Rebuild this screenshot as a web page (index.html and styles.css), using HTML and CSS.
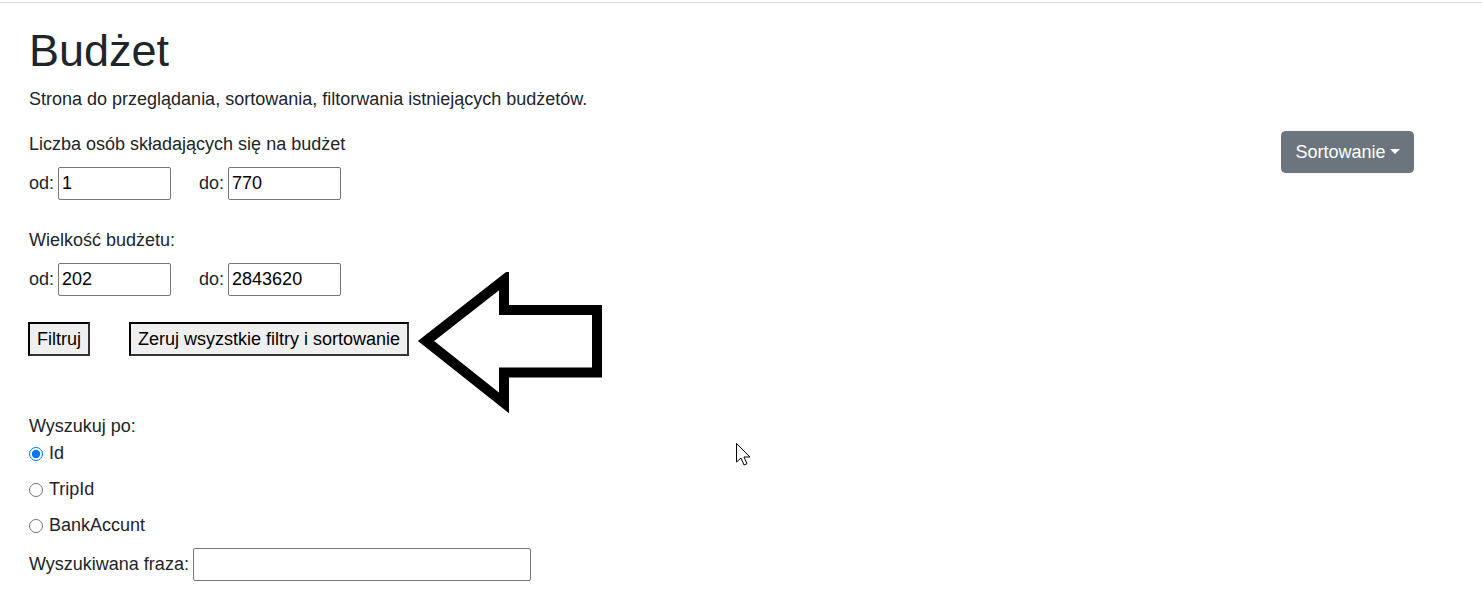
FILE: index.html
```html
<!DOCTYPE html>
<html lang="pl">
<head>
<meta charset="utf-8">
<title>Budżet</title>
<link rel="stylesheet" href="styles.css">
</head>
<body>
<div class="topbar"></div>
<main class="page">
  <h1 class="title">Budżet</h1>
  <p class="lead">Strona do przeglądania, sortowania, filtorwania istniejących budżetów.</p>
  <div class="row">
    <form class="filters">
      <div class="label">Liczba osób składających się na budżet</div>
      <div class="range">
        <label class="field">od: <input class="num" type="text" value="1"></label>
        <label class="field">do: <input class="num" type="text" value="770"></label>
      </div>
      <div class="label second">Wielkość budżetu:</div>
      <div class="range">
        <label class="field">od: <input class="num" type="text" value="202"></label>
        <label class="field">do: <input class="num" type="text" value="2843620"></label>
      </div>
      <div class="actions">
        <button type="button" class="btn">Filtruj</button>
        <button type="button" class="btn">Zeruj wsyzstkie filtry i sortowanie</button>
      </div>
      <div class="search">
        <div class="search-label">Wyszukuj po:</div>
        <label class="radio"><input type="radio" name="by" checked> Id</label>
        <label class="radio"><input type="radio" name="by"> TripId</label>
        <label class="radio"><input type="radio" name="by"> BankAccunt</label>
        <label class="phrase">Wyszukiwana fraza: <input class="wide" type="text"></label>
      </div>
    </form>
    <div class="sort">
      <button type="button" class="dropdown">Sortowanie<span class="caret"></span></button>
    </div>
  </div>
</main>
<svg class="arrow" width="200" height="150" viewBox="0 0 200 150" aria-hidden="true">
  <polygon points="11,69 89,8 89,38 182,38 182,100.5 89,100.5 89,131" fill="#fff" stroke="#000" stroke-width="10" stroke-linejoin="miter" stroke-miterlimit="10"/>
</svg>
<svg class="cursor" width="20" height="30" viewBox="0 0 20 30" aria-hidden="true">
  <path d="M1.5 1.5 L1.5 20 L6 16 L9 23 L12 21.7 L9 15 L15 15 Z" fill="#fff" stroke="#000" stroke-width="1" stroke-linejoin="miter"/>
</svg>
</body>
</html>
```

FILE: styles.css
```css
html, body {
  margin: 0;
  padding: 0;
  background: #fff;
}
body {
  font-family: "Liberation Sans", Arial, sans-serif;
  font-size: 18px;
  line-height: 27px;
  color: #212529;
  position: relative;
  min-height: 611px;
}
.topbar {
  height: 2px;
  border-bottom: 1px solid #dcdcdc;
}
.page {
  padding: 21px 68px 0 29px;
}
.title {
  margin: 0 0 8px;
  font-size: 45px;
  font-weight: 500;
  line-height: 54px;
}
.lead {
  margin: 0 0 18px;
}
.row {
  display: flex;
  justify-content: space-between;
  align-items: flex-start;
}
.label {
  margin-bottom: 9px;
}
.label.second {
  margin-top: 27px;
}
.range {
  display: flex;
  gap: 28px;
  height: 33px;
  align-items: center;
}
.field {
  display: flex;
  align-items: center;
  gap: 4px;
}
.num, .wide {
  font: inherit;
  font-family: "Liberation Sans", Arial, sans-serif;
  color: #000;
  box-sizing: border-box;
  height: 33px;
  width: 113px;
  padding: 1px 3px;
  border: 1px solid #767676;
  border-radius: 2px;
  background: #fff;
  line-height: 1;
}
.actions {
  display: flex;
  gap: 39px;
  margin-top: 26px;
  margin-left: -1px;
}
.btn {
  font: inherit;
  font-family: "Liberation Sans", Arial, sans-serif;
  color: #000;
  background: #efefef;
  border: 2px solid #000;
  border-right-color: #333;
  border-bottom-color: #333;
  height: 34px;
  padding: 0 7px;
  line-height: 1;
  border-radius: 0;
}
.search {
  margin-top: 57px;
}
.search-label {
  line-height: 27px;
}
.radio {
  display: flex;
  align-items: center;
  height: 27px;
  margin-bottom: 9px;
  gap: 6px;
}
.radio input {
  margin: 0;
  width: 14px;
  height: 14px;
  accent-color: #0075ff;
}
.phrase {
  display: flex;
  align-items: center;
  gap: 4px;
}
.wide {
  width: 338px;
}
.sort {
  flex: none;
}
.dropdown {
  font: inherit;
  font-family: "Liberation Sans", Arial, sans-serif;
  color: #fff;
  background: #6c757d;
  border: 1px solid #6c757d;
  border-radius: 4.4px;
  padding: 6px 13px;
  line-height: 27px;
  display: flex;
  align-items: center;
  width: 133px;
  height: 42px;
  justify-content: center;
}
.caret {
  display: inline-block;
  margin-left: 4px;
  border-top: 5px solid #fff;
  border-left: 5px solid transparent;
  border-right: 5px solid transparent;
  margin-top: -1px;
}
.arrow {
  position: absolute;
  left: 415px;
  top: 272px;
}
.cursor {
  position: absolute;
  left: 735px;
  top: 442px;
}
```
